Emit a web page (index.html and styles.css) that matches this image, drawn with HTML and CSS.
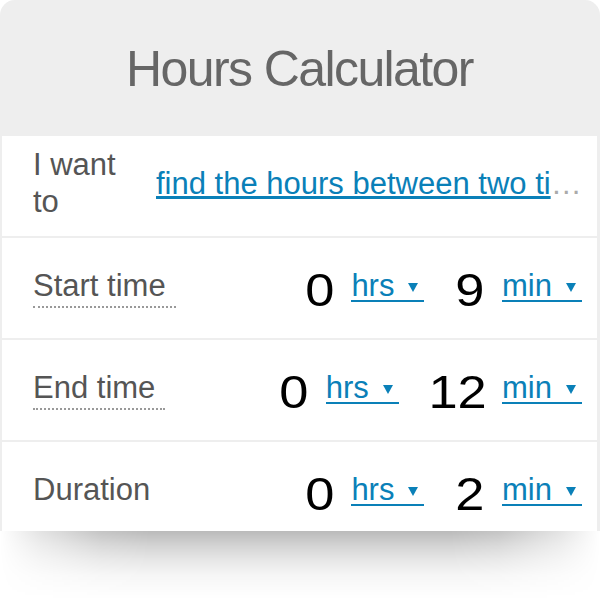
FILE: index.html
```html
<!DOCTYPE html>
<html lang="en">
<head>
  <meta charset="UTF-8">
  <title>Hours Calculator</title>
  <link rel="stylesheet" href="styles.css">
</head>
<body>
  <div class="calc">
    <h1 class="calc-title">Hours Calculator</h1>

    <div class="calc-row">
      <span class="calc-label calc-label-wrap">I want to</span>
      <div class="calc-choice"><a href="#">find the hours between two times</a></div>
    </div>

    <div class="calc-row">
      <span class="calc-label calc-label-hint">Start time</span>
      <div class="calc-fields">
        <div class="calc-field"><span class="calc-value">0</span><span class="calc-unit">hrs<i class="caret"></i></span></div>
        <div class="calc-field"><span class="calc-value">9</span><span class="calc-unit">min<i class="caret"></i></span></div>
      </div>
    </div>

    <div class="calc-row">
      <span class="calc-label calc-label-hint">End time</span>
      <div class="calc-fields">
        <div class="calc-field"><span class="calc-value">0</span><span class="calc-unit">hrs<i class="caret"></i></span></div>
        <div class="calc-field"><span class="calc-value">12</span><span class="calc-unit">min<i class="caret"></i></span></div>
      </div>
    </div>

    <div class="calc-row">
      <span class="calc-label">Duration</span>
      <div class="calc-fields">
        <div class="calc-field"><span class="calc-value">0</span><span class="calc-unit">hrs<i class="caret"></i></span></div>
        <div class="calc-field"><span class="calc-value">2</span><span class="calc-unit">min<i class="caret"></i></span></div>
      </div>
    </div>
  </div>
  <div class="calc-shadow"></div>
</body>
</html>
```

FILE: styles.css
```css
body {
  margin: 0;
  background: #fff;
  font-family: "Liberation Sans", Arial, sans-serif;
}

/* card: grey frame, white rows separated by 2px gaps, clipped at the bottom */
.calc {
  width: 600px;
  height: 531px;
  box-sizing: border-box;
  padding: 0 3px 0 2px;
  display: flex;
  flex-direction: column;
  gap: 2px;
  overflow: hidden;
  background: #eee;
  border-radius: 15px 15px 0 0;
}

/* soft shade under the card */
.calc-shadow {
  height: 69px;
  background: linear-gradient(rgba(0, 0, 0, .27), rgba(0, 0, 0, .17) 15px, rgba(0, 0, 0, .09) 30px, rgba(0, 0, 0, .035) 45px, rgba(0, 0, 0, .01) 60px, rgba(0, 0, 0, 0));
  -webkit-mask-image: linear-gradient(90deg, transparent 0, rgba(0, 0, 0, .4) 40px, rgba(0, 0, 0, .85) 100px, #000 150px, #000 450px, rgba(0, 0, 0, .85) 500px, rgba(0, 0, 0, .4) 560px, transparent 600px);
  mask-image: linear-gradient(90deg, transparent 0, rgba(0, 0, 0, .4) 40px, rgba(0, 0, 0, .85) 100px, #000 150px, #000 450px, rgba(0, 0, 0, .85) 500px, rgba(0, 0, 0, .4) 560px, transparent 600px);
}

.calc-title {
  flex: none;
  height: 134px;
  box-sizing: border-box;
  padding-top: 3px;
  margin: 0;
  display: flex;
  align-items: center;
  justify-content: center;
  font-size: 50px;
  font-weight: normal;
  letter-spacing: -1.6px;
  color: #666;
}

.calc-row {
  flex: none;
  height: 100px;
  box-sizing: border-box;
  padding: 0 15px 0 31px;
  display: flex;
  align-items: center;
  background: #fff;
  font-size: 31px;
}

.calc-label {
  flex: none;
  line-height: 36px;
  padding-bottom: 2px;
  border-bottom: 2px dotted transparent;
  color: #555;
}
.calc-label-wrap { width: 100px; margin: 0 23px 2px 0; line-height: 37px; }
.calc-label-hint { padding-right: 10px; border-bottom-color: #999; }

/* selected option, cut with an ellipsis */
.calc-choice {
  flex: 1;
  min-width: 0;
  padding-bottom: 5px;
  line-height: 36px;
  white-space: nowrap;
  overflow: hidden;
  text-overflow: ellipsis;
  color: #aaa;
}
.calc-choice a { color: #0a80b8; }

.calc-fields {
  margin-left: auto;
  display: flex;
  align-items: center;
  gap: 30px;
}
.calc-field {
  display: flex;
  align-items: center;
  gap: 16px;
}
/* digits are drawn a little wider than the text face */
.calc-value {
  padding: 3px 3px 0;
  font-size: 46px;
  color: #000;
  transform: scaleX(1.14);
}
.calc-unit {
  display: flex;
  align-items: center;
  margin-bottom: 4px;
  line-height: 29px;
  border-bottom: 2px solid;
  color: #0a80b8;
}
.caret {
  width: 0;
  height: 0;
  margin: 4px 6px 0 14px;
  border-left: 5px solid transparent;
  border-right: 5px solid transparent;
  border-top: 9px solid;
}
```
